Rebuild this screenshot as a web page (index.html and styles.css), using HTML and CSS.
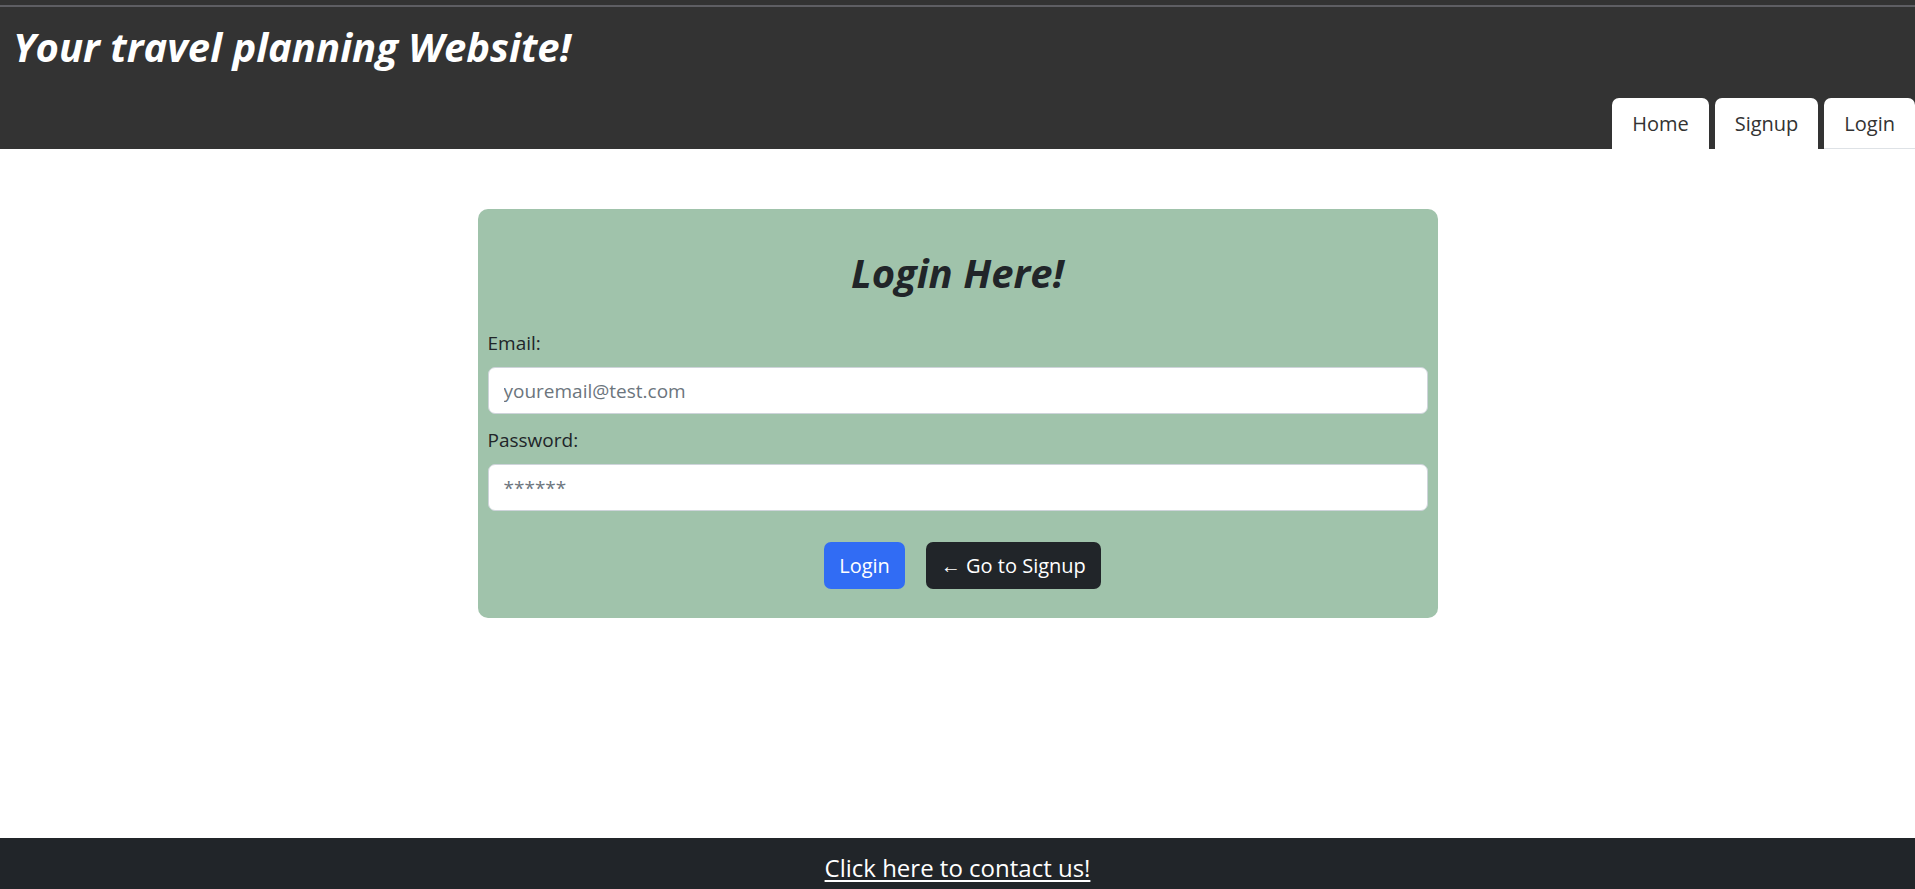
FILE: index.html
```html
<!DOCTYPE html>
<html lang="en">
<head>
<meta charset="utf-8">
<title>Login</title>
<link rel="stylesheet" href="styles.css">
</head>
<body>
<div class="page">
  <header class="header">
    <div class="topline"></div>
    <h1 class="site-title">Your travel planning Website!</h1>
    <nav class="tabs">
      <a class="tab" href="#">Home</a>
      <a class="tab" href="#">Signup</a>
      <a class="tab tab-last" href="#">Login</a>
    </nav>
  </header>
  <main class="main">
    <form class="card">
      <h2 class="card-title">Login Here!</h2>
      <label class="label" for="email">Email:</label>
      <input class="input" id="email" type="text" placeholder="youremail@test.com">
      <label class="label" for="pw">Password:</label>
      <input class="input" id="pw" type="password" placeholder="******">
      <div class="actions">
        <button class="btn btn-primary" type="button">Login</button>
        <button class="btn btn-dark" type="button">&larr; Go to Signup</button>
      </div>
    </form>
  </main>
  <footer class="footer">
    <a class="footer-link" href="#">Click here to contact us!</a>
  </footer>
</div>
</body>
</html>
```

FILE: styles.css
```css
* { box-sizing: border-box; }
html, body { margin: 0; padding: 0; }
body {
  font-family: "Open Sans", "Noto Sans", sans-serif;
  font-size: 20px;
  line-height: 1.5;
  color: #212529;
  background: #ffffff;
}
.page {
  display: flex;
  flex-direction: column;
  min-height: 100vh;
}
.header {
  background: #333333;
  height: 149px;
  display: flex;
  flex-direction: column;
}
.topline {
  height: 2px;
  margin-top: 5px;
  background: #5e5e63;
}
.site-title {
  margin: 16px 0 0 13px;
  font-size: 40px;
  line-height: 48px;
  font-style: italic;
  font-weight: 700;
  color: #ffffff;
}
.tabs {
  margin-top: auto;
  display: flex;
  justify-content: flex-end;
  gap: 6px;
}
.tab {
  display: block;
  background: #ffffff;
  color: #333333;
  text-decoration: none;
  font-size: 20px;
  line-height: 30px;
  padding: 11px 20px 10px;
  border-radius: 7px 7px 0 0;
}
.tab-last {
  border-bottom: 1px solid #dee2e6;
  padding-bottom: 9px;
}
.main {
  flex: 1;
  padding-top: 60px;
}
.card {
  width: 960px;
  margin: 0 auto;
  background: #a0c3ab;
  border-radius: 10px;
  padding: 10px 10px 29px;
  display: flex;
  flex-direction: column;
}
.card-title {
  margin: 30px 0 31px;
  text-align: center;
  font-size: 40px;
  line-height: 48px;
  font-style: italic;
  font-weight: 700;
  color: #212529;
}
.label {
  display: block;
  font-size: 19px;
  line-height: 30px;
  margin-bottom: 9px;
  color: #212529;
}
.input {
  display: block;
  width: 100%;
  height: 47px;
  margin: 0 0 11px;
  padding: 7px 15px;
  font-family: inherit;
  font-size: 19px;
  color: #212529;
  background: #ffffff;
  border: 1px solid #ced4da;
  border-radius: 7px;
}
.input::placeholder { color: #6c757d; }
.actions {
  display: flex;
  justify-content: center;
  gap: 21px;
  margin-top: 20px;
  padding-left: 10px;
}
.btn {
  font-family: inherit;
  font-size: 20px;
  line-height: 30px;
  height: 47px;
  padding: 7px 15px;
  border: none;
  border-radius: 7px;
  color: #ffffff;
  cursor: pointer;
}
.btn-primary { background: #316cf4; }
.btn-dark { background: #212529; }
.footer {
  background: #212529;
  height: 51px;
  display: flex;
  justify-content: center;
  align-items: center;
}
.footer-link {
  color: #ffffff;
  font-size: 24px;
  line-height: 36px;
  text-decoration: underline;
  text-underline-offset: 3px;
  margin-top: 8px;
}
```
